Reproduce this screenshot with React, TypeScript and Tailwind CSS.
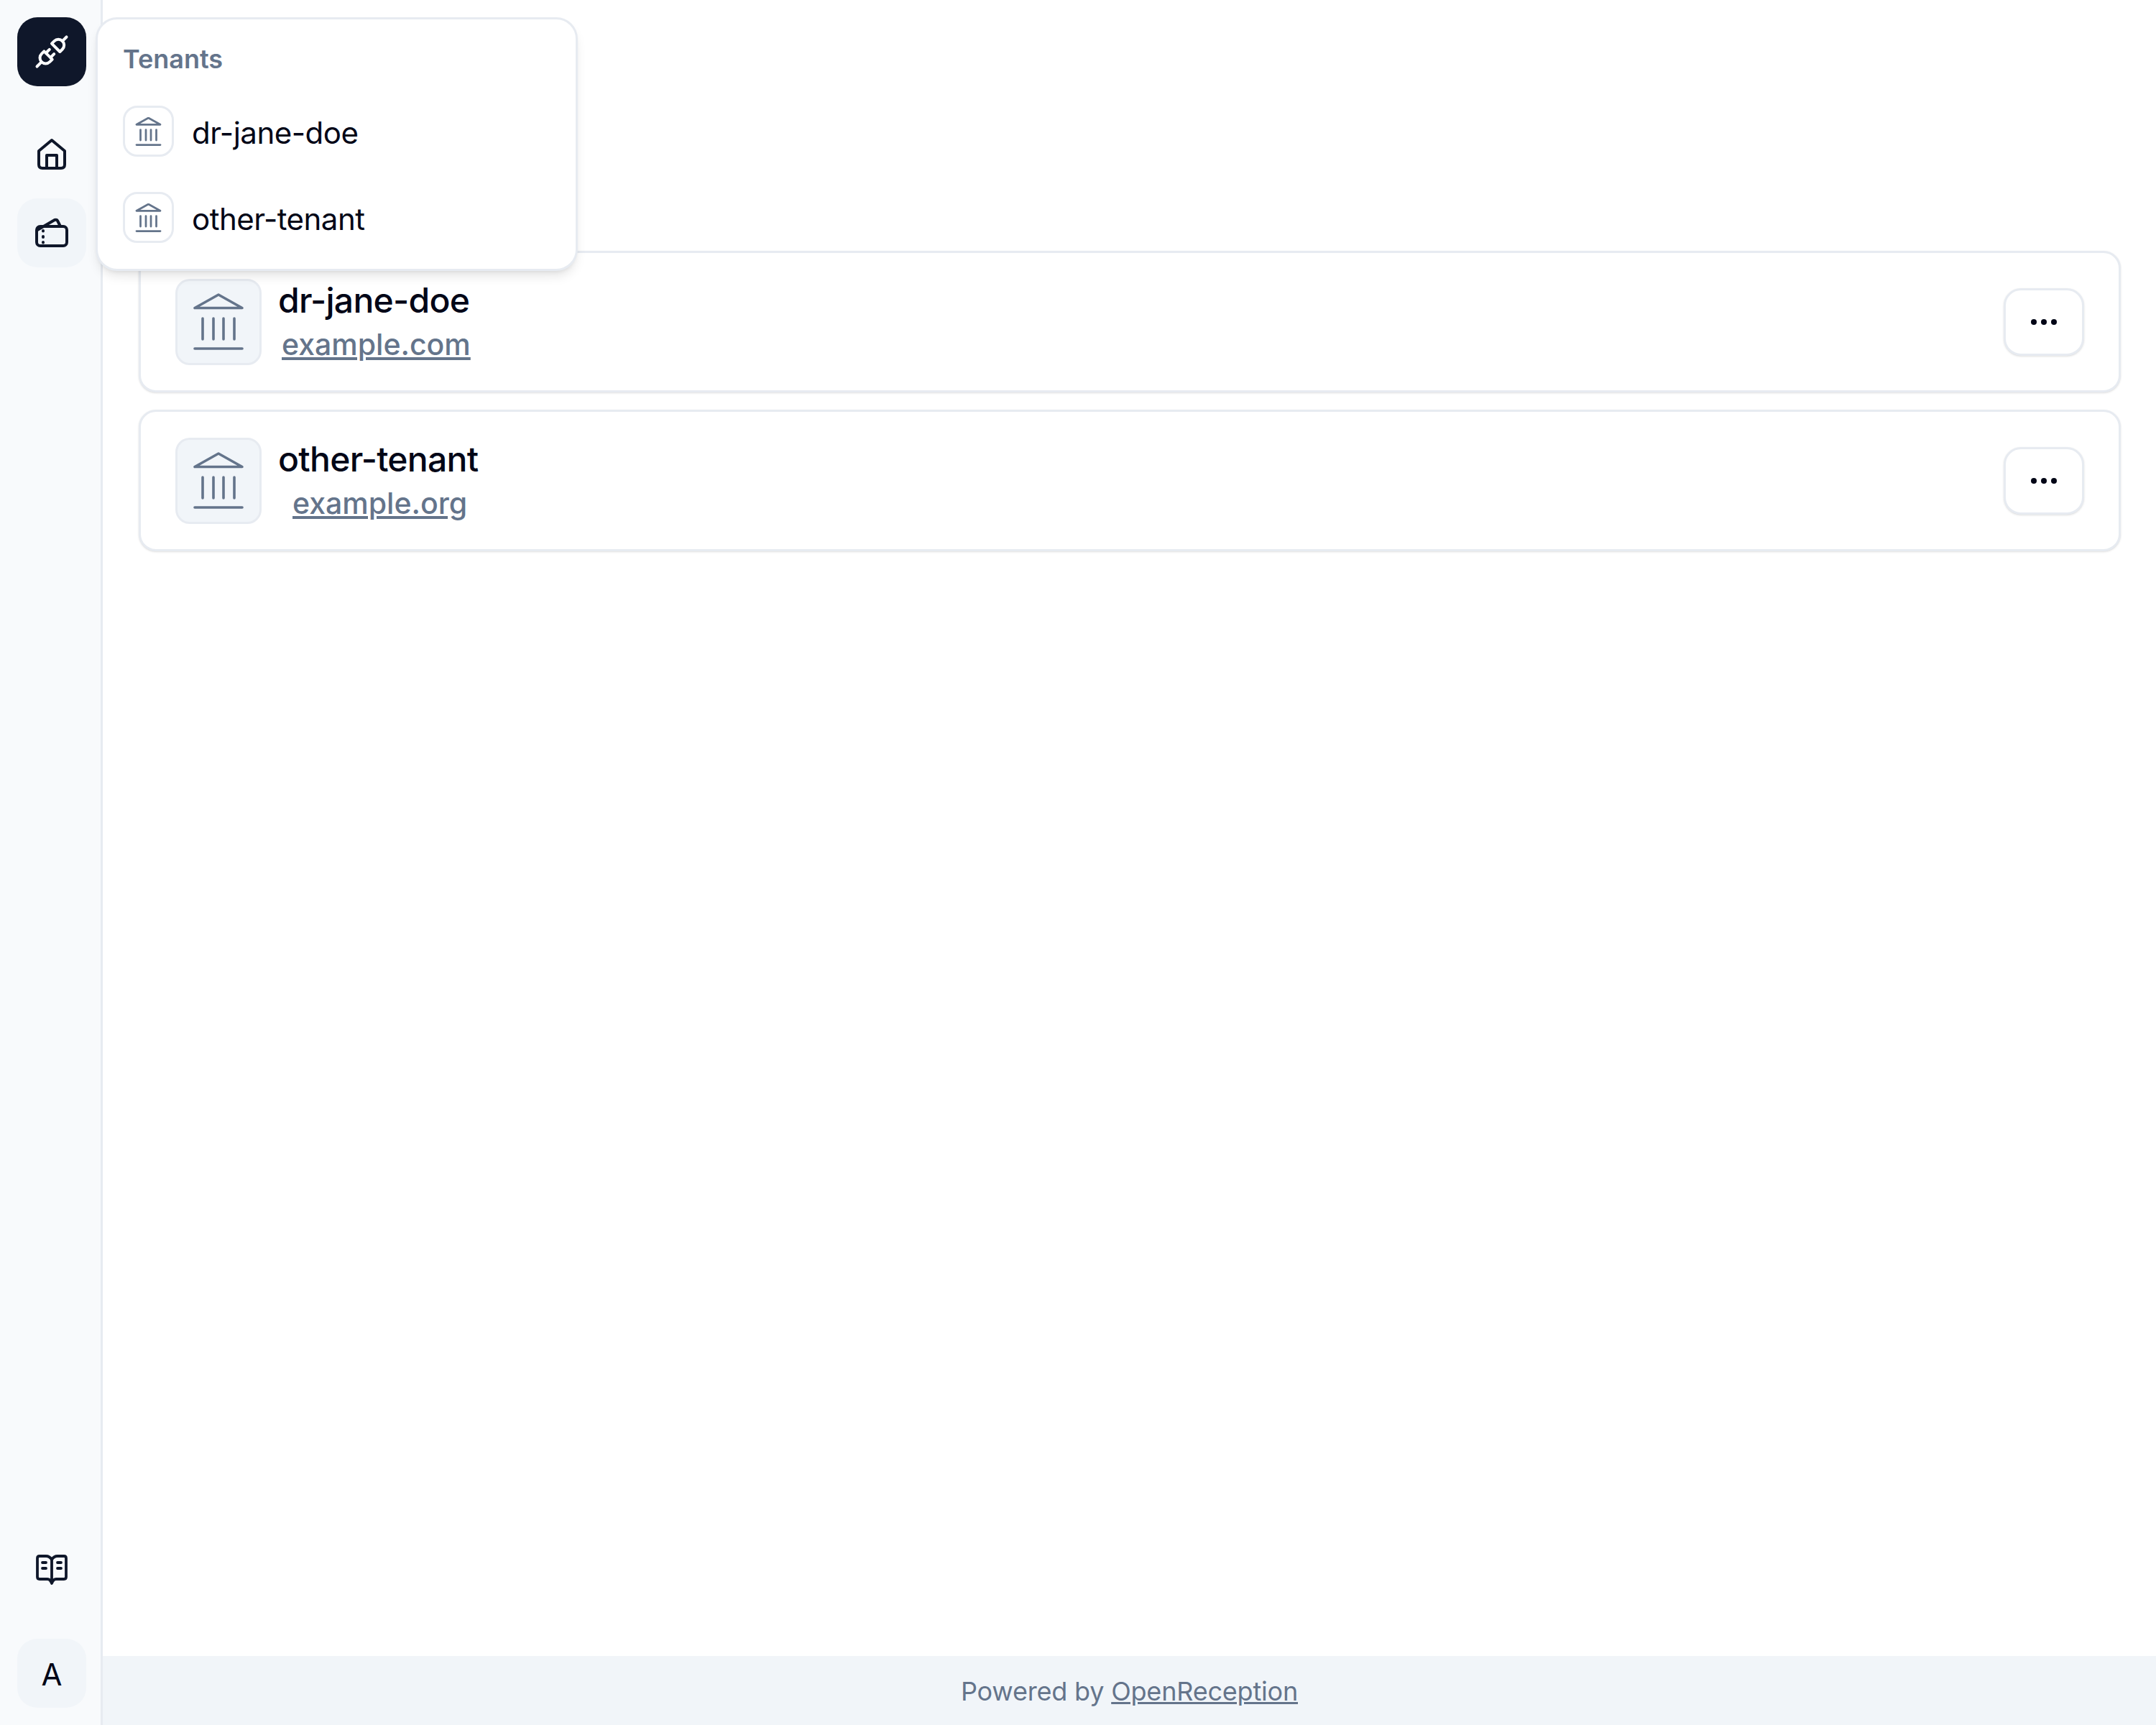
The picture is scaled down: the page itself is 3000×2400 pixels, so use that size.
const tenants = [
  { name: "dr-jane-doe", domain: "example.com", linkClass: "ml-[5px]" },
  { name: "other-tenant", domain: "example.org", linkClass: "ml-[20px]" },
]

function BankIcon({ className, strokeWidth }: { className: string; strokeWidth: number }) {
  return (
    <svg viewBox="0 0 74 80" fill="none" stroke="#64748b" strokeWidth={strokeWidth} strokeLinecap="round" strokeLinejoin="round" className={className}>
      <path d="M37 2 L4 20.5 H70 Z" />
      <path d="M15 35 V64 M30 35 V64 M44 35 V64 M59 35 V64" />
      <path d="M4 77 H70" />
    </svg>
  )
}

function PlugIcon() {
  return (
    <svg viewBox="0 0 96 96" fill="none" stroke="#fff" strokeWidth={4} strokeLinecap="round" strokeLinejoin="round" className="h-24 w-24">
      <g transform="rotate(-45 48 48)">
        <path d="M56 40 H61 a8 8 0 0 1 8 8 a8 8 0 0 1 -8 8 H56 Z" />
        <path d="M69 48 H77" />
        <path d="M41 40 H36 a8 8 0 0 0 -8 8 a8 8 0 0 0 8 8 H41 Z" />
        <path d="M41 43.5 H48 M41 52.5 H48 M28 48 H19" />
      </g>
    </svg>
  )
}

function HomeIcon() {
  return (
    <svg viewBox="0 0 44 46" fill="none" stroke="#0f172a" strokeWidth={4} strokeLinecap="round" strokeLinejoin="round" className="h-[46px] w-11">
      <path d="M22 3 L4 18 V37 Q4 42 9 42 H35 Q40 42 40 37 V18 Z" />
      <path d="M15 42 V24 H29 V42" />
    </svg>
  )
}

function TicketsIcon() {
  return (
    <svg viewBox="0 0 48 44" fill="none" stroke="#0f172a" strokeWidth={4} strokeLinecap="round" strokeLinejoin="round" className="mb-[5px] h-11 w-12">
      <rect x="3" y="15" width="42" height="27" rx="5" />
      <path d="M4 20 L28 6 Q31 5 32 7 L36 15" />
      <path d="M12 21 V21.5 M12 29 V30 M12 37 V37.5" />
    </svg>
  )
}

function BookIcon() {
  return (
    <svg viewBox="0 0 48 46" fill="none" stroke="#0f172a" strokeWidth={3.8} strokeLinecap="round" strokeLinejoin="round" className="h-[46px] w-12">
      <path d="M24 9 Q21 4 16 4 H7 Q4 4 4 7 V33 Q4 36 7 36 H18 Q22 36 24 42 Q26 36 30 36 H41 Q44 36 44 33 V7 Q44 4 41 4 H32 Q27 4 24 9 Z" />
      <path d="M24 9 V40" />
      <path d="M11 13 H16 M11 21 H16 M32 13 H37 M32 21 H37" />
    </svg>
  )
}

export default function App() {
  return (
    <div className="relative flex h-[2400px] w-[3000px] overflow-hidden bg-white font-['Inter',sans-serif] text-[#020617]">
      <aside className="flex w-[143px] shrink-0 flex-col items-start border-r-[3px] border-[#e7ebf1] bg-[#f8fafc] pl-6 pt-6 pb-6">
        <div className="flex h-24 w-24 items-center justify-center rounded-[28px] bg-[#0f172a]">
          <PlugIcon />
        </div>
        <div className="mt-[47px] flex h-24 w-24 items-center justify-center rounded-[28px]">
          <HomeIcon />
        </div>
        <div className="mt-[13px] flex h-24 w-24 items-center justify-center rounded-[28px] bg-[#f1f5f9]">
          <TicketsIcon />
        </div>
        <div className="mt-auto flex h-24 w-24 items-center justify-center rounded-[28px]">
          <BookIcon />
        </div>
        <div className="mt-[48px] flex h-24 w-24 items-center justify-center rounded-[28px] bg-[#f1f5f9] pt-[3px] text-[42px] leading-none">
          A
        </div>
      </aside>

      <main className="flex min-w-0 flex-1 flex-col">
        <div className="flex flex-1 flex-col gap-6 pt-[349px] pl-[50px] pr-[49px]">
          {tenants.map((tenant) => (
            <div key={tenant.name} className="flex h-[197px] items-center rounded-3xl border-[3px] border-[#e7ebf1] bg-white pl-12 pr-12 shadow-sm">
              <div className="flex h-[120px] w-[120px] shrink-0 items-center justify-center rounded-[20px] border-[3px] border-[#e7ebf1] bg-[#f1f5f9]">
                <BankIcon className="h-20 w-[74px]" strokeWidth={3.6} />
              </div>
              <div className="ml-[23px] flex flex-col pb-1">
                <div className="mb-1 text-[48px] leading-[62px] font-medium tracking-[-0.7px]">{tenant.name}</div>
                <a href="#" className={`text-[41px] leading-[52px] font-medium text-[#64748b] underline ${tenant.linkClass}`}>
                  {tenant.domain}
                </a>
              </div>
              <button className="ml-auto flex h-[94px] w-[112px] items-center justify-center gap-[6px] rounded-3xl border-[3px] border-[#e7ebf1] bg-white shadow-sm">
                <span className="h-2 w-2 rounded-full bg-[#020617]" />
                <span className="h-2 w-2 rounded-full bg-[#020617]" />
                <span className="h-2 w-2 rounded-full bg-[#020617]" />
              </button>
            </div>
          ))}
        </div>
        <footer className="flex h-[96px] items-center justify-center bg-[#f1f5f9] pt-[2px] text-[36px] tracking-[-0.2px] text-[#64748b]">
          <span>
            Powered by{" "}
            <a href="#" className="underline">
              OpenReception
            </a>
          </span>
        </footer>
      </main>

      {/* tenant switcher popover, open over the page */}
      <div className="absolute top-6 left-[133px] w-[671px] rounded-[30px] border-[3px] border-[#e7ebf1] bg-white px-[35px] pt-[33px] pb-[36px] shadow-lg">
        <div className="text-[36px] leading-[44px] font-semibold text-[#64748b]">Tenants</div>
        <div className="mt-[43px] flex flex-col gap-[49px]">
          {tenants.map((tenant) => (
            <div key={tenant.name} className="flex items-center gap-[25px]">
              <div className="flex h-[71px] w-[71px] shrink-0 items-center justify-center rounded-[20px] border-[3px] border-[#e7ebf1] bg-white">
                <BankIcon className="h-10 w-[37px]" strokeWidth={5.5} />
              </div>
              <span className="pt-[5px] text-[42px] leading-none tracking-[-0.5px]">{tenant.name}</span>
            </div>
          ))}
        </div>
      </div>
    </div>
  )
}
